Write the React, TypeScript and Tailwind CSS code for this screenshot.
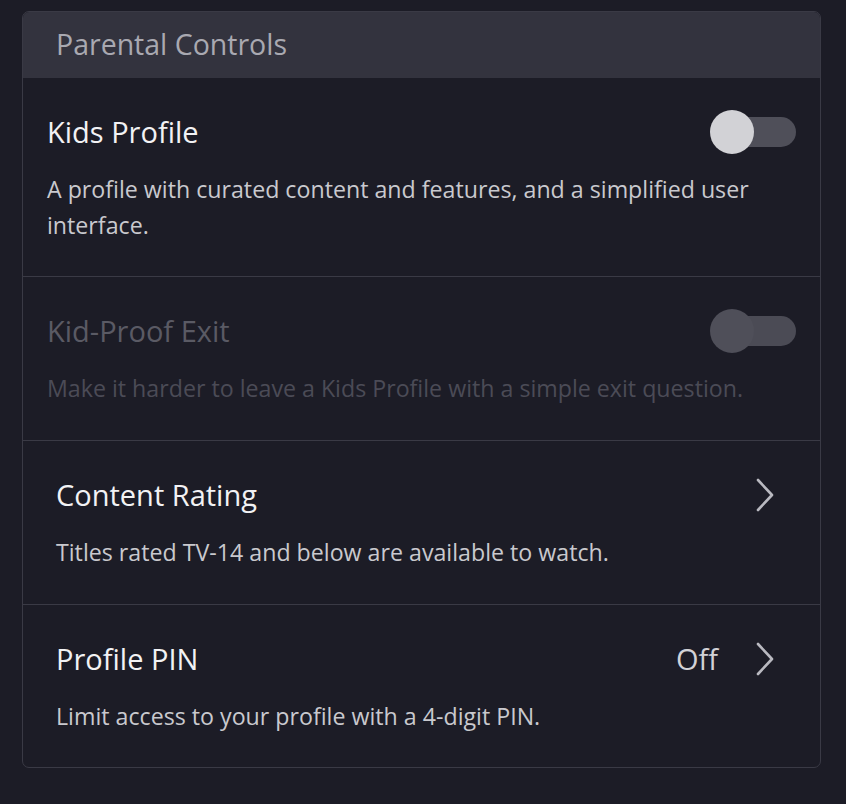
import React from "react";

function Toggle({ disabled }: { disabled?: boolean }) {
  return (
    <div className="relative w-[86px] h-[44px] flex items-center">
      <div
        className={`absolute right-0 h-[30px] w-[78px] rounded-full ${
          disabled ? "bg-[#4b4b55]" : "bg-[#4f4f59]"
        }`}
      />
      <div
        className={`absolute left-0 h-[44px] w-[44px] rounded-full ${
          disabled ? "bg-[#4f4f59]" : "bg-[#d2d2d6]"
        }`}
      />
    </div>
  );
}

function Chevron() {
  return (
    <svg width="20" height="34" viewBox="0 0 20 34" fill="none">
      <path
        d="M3 2 L17 17 L3 32"
        stroke="#b9b9c0"
        strokeWidth="2.6"
        strokeLinecap="round"
        strokeLinejoin="round"
      />
    </svg>
  );
}

export default function App() {
  return (
    <div
      className="min-h-[804px] w-full bg-[#1c1c26] pt-[11px] pl-[22px] pr-[25px]"
      style={{ fontFamily: "'Open Sans', 'Noto Sans', sans-serif" }}
    >
      <div className="w-[799px] rounded-[7px] border border-[#3a3a45] overflow-hidden">
        <div className="h-[66px] bg-[#33333e] flex items-center pl-[33px] pb-[1px] text-[28.5px] text-[#a9a9b1]">
          Parental Controls
        </div>

        {/* Kids Profile */}
        <div className="pl-[24px] pr-[24px] pt-[36px] pb-[33px] border-b border-[#3a3a45]">
          <div className="h-[36px] flex items-center justify-between">
            <span className="text-[29px] leading-[36px] text-[#f2f2f4]">Kids Profile</span>
            <Toggle />
          </div>
          <p className="mt-[21px] text-[23.2px] leading-[36px] text-[#c9c9ce] pr-[40px]">
            A profile with curated content and features, and a simplified user interface.
          </p>
        </div>

        {/* Kid-Proof Exit */}
        <div className="pl-[24px] pr-[24px] pt-[36px] pb-[34px] border-b border-[#3a3a45]">
          <div className="h-[36px] flex items-center justify-between">
            <span className="text-[29px] leading-[36px] text-[#5a5a64]">Kid-Proof Exit</span>
            <Toggle disabled />
          </div>
          <p className="mt-[21px] text-[23.2px] leading-[36px] text-[#4b4b56]">
            Make it harder to leave a Kids Profile with a simple exit question.
          </p>
        </div>

        {/* Content Rating */}
        <div className="pl-[33px] pr-[45px] pt-[36px] pb-[34px] border-b border-[#3a3a45]">
          <div className="h-[36px] flex items-center justify-between">
            <span className="text-[29px] leading-[36px] text-[#f2f2f4]">Content Rating</span>
            <Chevron />
          </div>
          <p className="mt-[21px] text-[23.2px] leading-[36px] text-[#c9c9ce]">
            Titles rated TV-14 and below are available to watch.
          </p>
        </div>

        {/* Profile PIN */}
        <div className="pl-[33px] pr-[45px] pt-[36px] pb-[33px]">
          <div className="h-[36px] flex items-center justify-between">
            <span className="text-[29px] leading-[36px] text-[#f2f2f4]">Profile PIN</span>
            <div className="flex items-center gap-[37px]">
              <span className="text-[29px] leading-[36px] text-[#d2d2d6]">Off</span>
              <Chevron />
            </div>
          </div>
          <p className="mt-[21px] text-[23.2px] leading-[36px] text-[#c9c9ce]">
            Limit access to your profile with a 4-digit PIN.
          </p>
        </div>
      </div>
    </div>
  );
}
